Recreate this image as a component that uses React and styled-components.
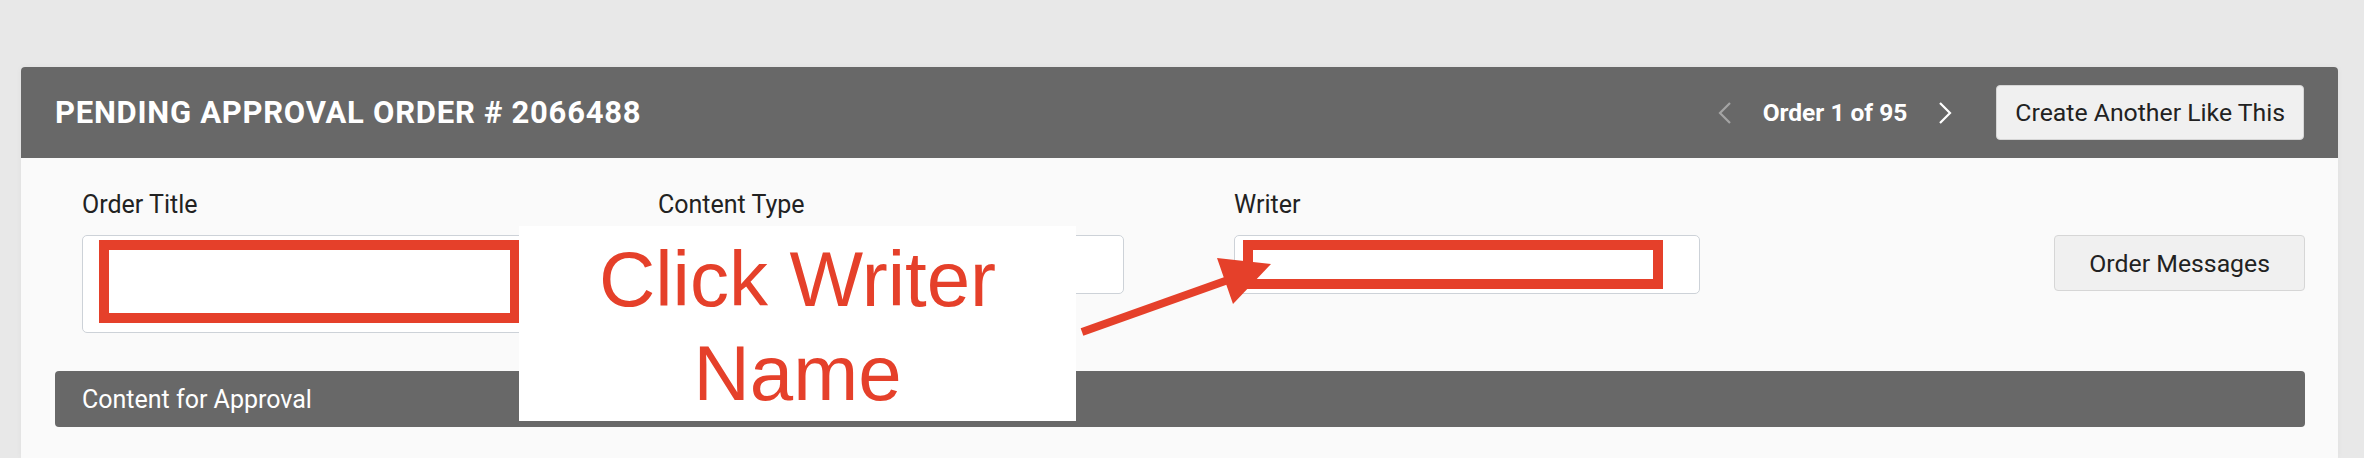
import React from 'react';
import styled, { createGlobalStyle } from 'styled-components';

const GlobalStyle = createGlobalStyle`
  html, body {
    margin: 0;
    padding: 0;
    background: #e8e8e8;
  }
  body {
    font-family: Roboto, "Noto Sans", sans-serif;
    color: #222;
  }
`;

const ANNOTATION_RED = '#e5402a';

// Layout
const PageStyle = styled.div`
  position: relative;
  height: 458px;
  overflow: hidden;
  padding: 67px 26px 0 21px;
  box-sizing: border-box;
`;

const PanelStyle = styled.div`
  height: 391px;
  background: #fafafa;
  border-radius: 4px 4px 0 0;
  box-shadow: 0 0 6px rgba(0, 0, 0, 0.04);
  overflow: hidden;
`;

const PanelHeaderStyle = styled.div`
  display: flex;
  align-items: center;
  justify-content: space-between;
  height: 91px;
  padding: 0 34px;
  background: #686868;
  color: #fff;
`;

const PanelTitleStyle = styled.h1`
  margin: 0;
  font-size: 31px;
  font-weight: 700;
  letter-spacing: 0.75px;
`;

const HeaderActionsStyle = styled.div`
  display: flex;
  align-items: center;
`;

const PagerStyle = styled.div`
  display: flex;
  align-items: center;
  gap: 31px;
  margin-right: 44px;
  font-size: 24.5px;
  font-weight: 700;
`;

const ChevronStyle = styled.svg`
  display: block;
  width: 14px;
  height: 22px;
  color: ${props => (props.disabled ? '#a4a4a4' : '#fff')};
`;

const ButtonStyle = styled.button`
  height: ${props => props.height || 55}px;
  padding: 0 ${props => props.padX || 18}px;
  font-family: Roboto, sans-serif;
  font-size: 24.8px;
  color: #222;
  background: #f0f0f0;
  border: 1px solid #d6d6d6;
  border-radius: 4px;
  cursor: pointer;
`;

const PanelBodyStyle = styled.div`
  padding: 33px 33px 0 34px;
`;

const FieldRowStyle = styled.div`
  display: flex;
  align-items: flex-start;
  padding-left: 27px;
`;

const FieldStyle = styled.div`
  width: 466px;
  margin-right: 110px;
`;

const FieldLabelStyle = styled.label`
  display: block;
  font-size: 25px;
  line-height: 28px;
  color: #222;
  margin-bottom: 16px;
`;

const InputBoxStyle = styled.div`
  height: ${props => props.height}px;
  box-sizing: border-box;
  padding: 4px 0 0 ${props => props.insetX}px;
  background: #fff;
  border: 1px solid #cdd2d8;
  border-radius: 5px;
`;

const HighlightStyle = styled.div`
  width: ${props => props.width}px;
  height: ${props => props.height}px;
  box-sizing: border-box;
  border: 10px solid ${ANNOTATION_RED};
`;

const RowEndStyle = styled.div`
  margin-left: auto;
`;

const SectionBarStyle = styled.div`
  display: flex;
  align-items: center;
  height: 56px;
  margin-top: 38px;
  padding-left: 27px;
  background: #686868;
  border-radius: 4px;
  color: #fff;
  font-size: 25px;
`;

// Annotation overlay
const CalloutStyle = styled.div`
  position: absolute;
  left: 519px;
  top: 226px;
  width: 557px;
  height: 195px;
  box-sizing: border-box;
  padding-top: 6px;
  background: #fff;
  color: ${ANNOTATION_RED};
  font-family: "Liberation Sans", Arial, sans-serif;
  font-size: 78px;
  line-height: 94px;
  text-align: center;
`;

const ArrowStyle = styled.svg`
  position: absolute;
  left: 1060px;
  top: 240px;
  width: 230px;
  height: 110px;
  overflow: visible;
`;

// Components
const Chevron = ({ dir, disabled }) => (
  <ChevronStyle viewBox="0 0 14 22" disabled={disabled}>
    <path
      d={dir === 'left' ? 'M12 1 L2 11 L12 21' : 'M2 1 L12 11 L2 21'}
      fill="none"
      stroke="currentColor"
      strokeWidth="2.2"
    />
  </ChevronStyle>
);

const Field = ({ label, height, children, insetX }) => (
  <FieldStyle>
    <FieldLabelStyle>{label}</FieldLabelStyle>
    <InputBoxStyle height={height} insetX={insetX}>
      {children}
    </InputBoxStyle>
  </FieldStyle>
);

// arrow coords are relative to the svg box at (1060, 240)
const Arrow = () => (
  <ArrowStyle viewBox="0 0 230 110">
    <line
      x1="22"
      y1="92"
      x2="168"
      y2="40"
      stroke={ANNOTATION_RED}
      strokeWidth="8"
    />
    <polygon points="157,18 211,24 173,64" fill={ANNOTATION_RED} />
  </ArrowStyle>
);

const App = () => (
  <>
    <GlobalStyle />
    <PageStyle>
      <PanelStyle>
        <PanelHeaderStyle>
          <PanelTitleStyle>PENDING APPROVAL ORDER # 2066488</PanelTitleStyle>
          <HeaderActionsStyle>
            <PagerStyle>
              <Chevron dir="left" disabled />
              <span>Order 1 of 95</span>
              <Chevron dir="right" />
            </PagerStyle>
            <ButtonStyle>Create Another Like This</ButtonStyle>
          </HeaderActionsStyle>
        </PanelHeaderStyle>
        <PanelBodyStyle>
          <FieldRowStyle>
            <Field label="Order Title" height={98} insetX={16}>
              <HighlightStyle width={421} height={83} />
            </Field>
            <Field label="Content Type" height={59} insetX={0} />
            <Field label="Writer" height={59} insetX={8}>
              <HighlightStyle width={420} height={49} />
            </Field>
            <RowEndStyle>
              <FieldLabelStyle>&nbsp;</FieldLabelStyle>
              <ButtonStyle height={56} padX={34}>
                Order Messages
              </ButtonStyle>
            </RowEndStyle>
          </FieldRowStyle>
          <SectionBarStyle>Content for Approval</SectionBarStyle>
        </PanelBodyStyle>
      </PanelStyle>
      <Arrow />
      <CalloutStyle>
        Click Writer
        <br />
        Name
      </CalloutStyle>
    </PageStyle>
  </>
);

export default App;
